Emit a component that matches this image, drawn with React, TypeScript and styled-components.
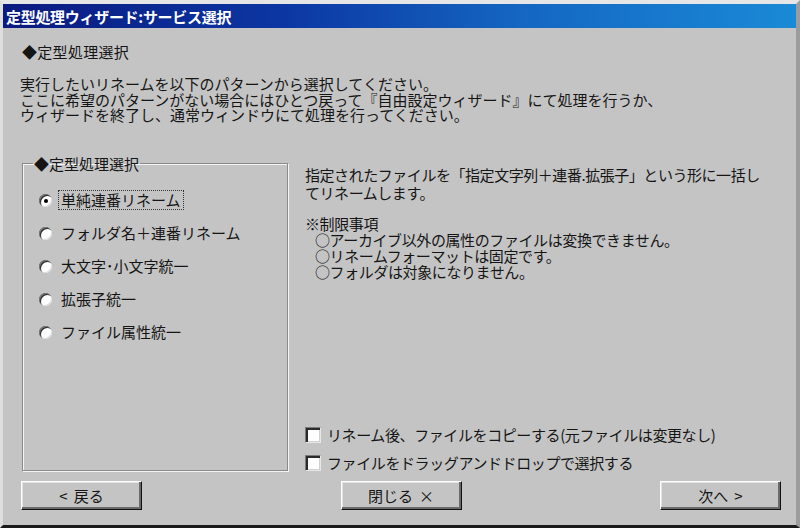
import React from "react";
import styled, { createGlobalStyle } from "styled-components";

const GlobalStyle = createGlobalStyle`
  html, body {
    margin: 0;
    padding: 0;
    background: #c4c4c4;
  }
  * { box-sizing: border-box; }
`;

const FONT = `"Noto Sans CJK JP", "Noto Sans", sans-serif`;

const Window = styled.div`
  width: 800px;
  height: 528px;
  display: flex;
  flex-direction: column;
  background: #c4c4c4;
  border-top: 4px solid #e6e6e6;
  border-left: 3px solid #dedede;
  border-right: 4px solid #9c9c9c;
  border-bottom: 3px solid #1a1a1a;
  font-family: ${FONT};
  font-size: 15px;
  color: #151515;
`;

const TitleBar = styled.div`
  height: 24px;
  flex: none;
  display: flex;
  align-items: center;
  padding-left: 3px;
  background: linear-gradient(90deg, #0a1a80 0%, #0c36a2 35%, #1466c2 65%, #1a8ad6 100%);
  color: #ffffff;
  font-weight: 700;
  font-size: 15px;
  letter-spacing: -0.3px;
`;

const Body = styled.div`
  flex: 1;
  display: flex;
  flex-direction: column;
  padding: 16px 15px 0 19px;
`;

const Heading = styled.div`
  line-height: 16px;
  letter-spacing: 0.3px;
`;

const Intro = styled.p`
  margin: 16px 0 0 -2px;
  line-height: 15.5px;
`;

const MainRow = styled.div`
  margin-top: 33px;
  height: 315px;
  display: flex;
  gap: 17px;
`;

const GroupBox = styled.fieldset`
  margin: 0;
  width: 266px;
  min-width: 0;
  padding: 0 10px;
  border: 1px solid #8a8a8a;
  box-shadow: inset 1px 1px 0 #f4f4f4, 1px 1px 0 #f4f4f4;
`;

const Legend = styled.legend`
  padding: 0 1px;
  line-height: 16px;
`;

const RadioList = styled.div`
  padding: 12px 0 0 6px;
  display: flex;
  flex-direction: column;
`;

const RadioRow = styled.label`
  height: 33px;
  display: flex;
  align-items: center;
  gap: 6px;
`;

const RadioCircle = styled.span<{ $checked?: boolean }>`
  width: 13px;
  height: 13px;
  flex: none;
  border-radius: 50%;
  background: #ffffff;
  box-shadow: inset 1px 1px 0 #7a7a7a, inset 2px 2px 0 #303030, inset -1px -1px 0 #dcdcdc;
  display: flex;
  align-items: center;
  justify-content: center;
  &::after {
    content: "";
    display: ${(p) => (p.$checked ? "block" : "none")};
    width: 4px;
    height: 4px;
    border-radius: 50%;
    background: #000;
    margin: 1px 0 0 1px;
  }
`;

const RadioText = styled.span<{ $focused?: boolean }>`
  line-height: 16px;
  padding: 1px 2px;
  border: 1px ${(p) => (p.$focused ? "dotted #333" : "solid transparent")};
`;

const RightColumn = styled.div`
  flex: 1;
  display: flex;
  flex-direction: column;
  justify-content: space-between;
  padding-top: 10px;
`;

const Description = styled.div`
  line-height: 18px;
  letter-spacing: -0.45px;
`;

const Notes = styled.div`
  margin-top: 14px;
  line-height: 16px;
  letter-spacing: -0.4px;
`;

const NoteItem = styled.div`
  padding-left: 10px;
`;

const CheckList = styled.div`
  display: flex;
  flex-direction: column;
  gap: 12px;
`;

const CheckRow = styled.label`
  height: 16px;
  display: flex;
  align-items: center;
  gap: 6px;
  letter-spacing: -0.4px;
`;

const CheckBox = styled.span`
  width: 16px;
  height: 16px;
  flex: none;
  background: #ffffff;
  border-top: 1px solid #7a7a7a;
  border-left: 1px solid #7a7a7a;
  border-right: 1px solid #e8e8e8;
  border-bottom: 1px solid #e8e8e8;
  box-shadow: inset 2px 2px 0 #2a2a2a, inset -1px -1px 0 #d0d0d0;
`;

const ButtonRow = styled.div`
  margin-top: 10px;
  display: flex;
  justify-content: space-between;
  margin-left: -1px;
`;

const Button = styled.button`
  width: 121px;
  height: 29px;
  padding: 0;
  font-family: ${FONT};
  font-size: 15px;
  color: #151515;
  background: #c4c4c4;
  border: 1px solid;
  border-color: #ffffff #101010 #101010 #ffffff;
  box-shadow: inset -2px -2px 0 #6a6a6a, inset 1px 1px 0 #e2e2e2;
  display: flex;
  align-items: center;
  justify-content: center;
  gap: 6px;
`;

const radios = [
  "単純連番リネーム",
  "フォルダ名＋連番リネーム",
  "大文字･小文字統一",
  "拡張子統一",
  "ファイル属性統一",
];

export default function App() {
  return (
    <>
      <GlobalStyle />
      <Window>
        <TitleBar>定型処理ウィザード:サービス選択</TitleBar>
        <Body>
          <Heading>◆定型処理選択</Heading>
          <Intro>
            実行したいリネームを以下のパターンから選択してください。
            <br />
            ここに希望のパターンがない場合にはひとつ戻って『自由設定ウィザード』にて処理を行うか、
            <br />
            ウィザードを終了し、通常ウィンドウにて処理を行ってください。
          </Intro>
          <MainRow>
            <GroupBox>
              <Legend>◆定型処理選択</Legend>
              <RadioList>
                {radios.map((r, i) => (
                  <RadioRow key={r}>
                    <RadioCircle $checked={i === 0} />
                    <RadioText $focused={i === 0}>{r}</RadioText>
                  </RadioRow>
                ))}
              </RadioList>
            </GroupBox>
            <RightColumn>
              <div>
                <Description>
                  指定されたファイルを「指定文字列＋連番.拡張子」という形に一括し
                  <br />
                  てリネームします。
                </Description>
                <Notes>
                  <div>※制限事項</div>
                  <NoteItem>○アーカイブ以外の属性のファイルは変換できません。</NoteItem>
                  <NoteItem>○リネームフォーマットは固定です。</NoteItem>
                  <NoteItem>○フォルダは対象になりません。</NoteItem>
                </Notes>
              </div>
              <CheckList>
                <CheckRow>
                  <CheckBox />
                  リネーム後、ファイルをコピーする(元ファイルは変更なし)
                </CheckRow>
                <CheckRow>
                  <CheckBox />
                  ファイルをドラッグアンドドロップで選択する
                </CheckRow>
              </CheckList>
            </RightColumn>
          </MainRow>
          <ButtonRow>
            <Button>
              <span>&lt;</span>
              <span>戻る</span>
            </Button>
            <Button>
              <span>閉じる</span>
              <span>×</span>
            </Button>
            <Button>
              <span>次へ</span>
              <span>&gt;</span>
            </Button>
          </ButtonRow>
        </Body>
      </Window>
    </>
  );
}
